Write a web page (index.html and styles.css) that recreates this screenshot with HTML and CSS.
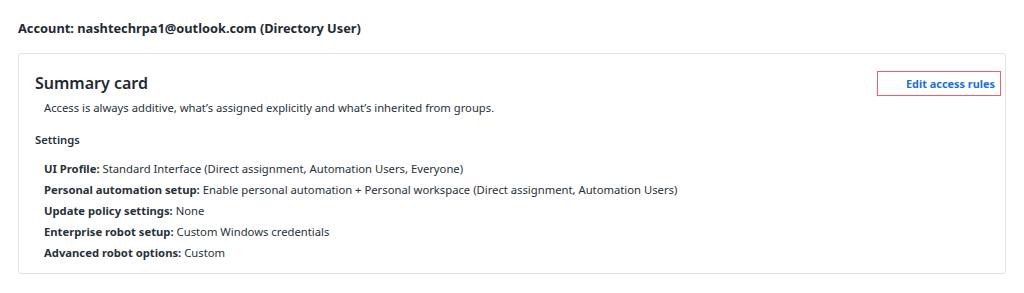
FILE: index.html
```html
<!DOCTYPE html>
<html>
<head>
<meta charset="utf-8">
<link rel="stylesheet" href="styles.css">
</head>
<body>
<div class="page">
  <h2 class="account">Account: nashtechrpa1@outlook.com (Directory User)</h2>
  <section class="card">
    <div class="card-head">
      <h3 class="card-title">Summary card</h3>
      <a class="edit-link" href="#">Edit access rules</a>
    </div>
    <p class="desc">Access is always additive, what’s assigned explicitly and what’s inherited from groups.</p>
    <h4 class="section-title">Settings</h4>
    <ul class="settings">
      <li><b>UI Profile:</b> Standard Interface (Direct assignment, Automation Users, Everyone)</li>
      <li><b>Personal automation setup:</b> Enable personal automation + Personal workspace (Direct assignment, Automation Users)</li>
      <li><b>Update policy settings:</b> None</li>
      <li><b>Enterprise robot setup:</b> Custom Windows credentials</li>
      <li><b>Advanced robot options:</b> Custom</li>
    </ul>
  </section>
</div>
</body>
</html>
```
FILE: styles.css
```css
* { box-sizing: border-box; }
html, body { margin: 0; padding: 0; background: #fff; }
body {
  font-family: "Noto Sans", "Open Sans", sans-serif;
  color: #273139;
  font-size: 11.25px;
}
.page { padding: 19px 18px; }
.account {
  margin: 0 0 16px 0;
  font-size: 12.8px;
  font-weight: 700;
  line-height: 18px;
  color: #1f2a33;
}
.card {
  border: 1px solid #dfe3e6;
  border-radius: 3px;
  padding: 17px 4px 10px 16px;
  width: 988px;
}
.card-head {
  display: flex;
  justify-content: space-between;
  align-items: flex-start;
}
.card-title {
  margin: 1px 0 0 0;
  font-size: 16px;
  font-weight: 600;
  line-height: 22px;
  color: #1f2a33;
}
.edit-link {
  display: block;
  width: 124px;
  height: 25px;
  line-height: 23px;
  border: 1px solid #f0606a;
  text-align: right;
  padding-right: 5px;
  color: #1a6fd8;
  font-weight: 700;
  font-size: 10.9px;
  text-decoration: none;
}
.desc {
  margin: 3px 0 0 9px;
  line-height: 18px;
}
.section-title {
  margin: 14px 0 0 0;
  font-size: 11.25px;
  font-weight: 600;
  line-height: 18px;
}
.settings {
  list-style: none;
  margin: 9px 0 0 9px;
  padding: 0;
}
.settings li {
  line-height: 21px;
}
.settings b { font-weight: 700; }
```
